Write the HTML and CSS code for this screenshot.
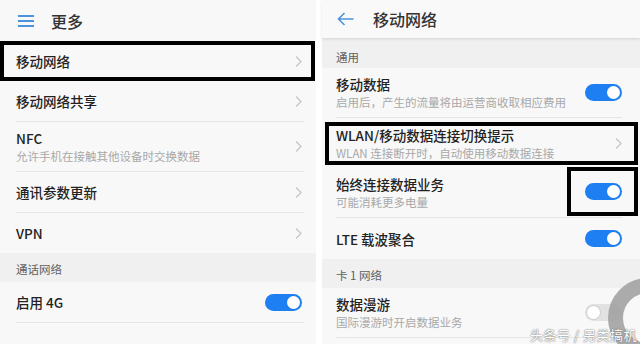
FILE: index.html
```html
<!DOCTYPE html>
<html lang="zh-CN">
<head>
<meta charset="utf-8">
<title>移动网络</title>
<link rel="stylesheet" href="styles.css">
</head>
<body>
<div class="screen">
  <section class="panel left">
    <header class="bar">
      <svg class="menu" width="16" height="12" viewBox="0 0 16 12"><path d="M0 1H16M0 6H16M0 11H16" stroke="#4b93dc" stroke-width="2"/></svg>
      <h1 class="bar-title menu-title">更多</h1>
    </header>
    <div class="row boxed first">
      <span class="title">移动网络</span>
      <svg class="chev" width="7" height="11" viewBox="0 0 7 11"><path d="M1 0.5L6 5.5L1 10.5" fill="none" stroke="#c4c4c4" stroke-width="1.2"/></svg>
    </div>
    <div class="row line">
      <span class="title">移动网络共享</span>
      <svg class="chev" width="7" height="11" viewBox="0 0 7 11"><path d="M1 0.5L6 5.5L1 10.5" fill="none" stroke="#c4c4c4" stroke-width="1.2"/></svg>
    </div>
    <div class="row line tall">
      <div class="text"><div class="title">NFC</div><div class="sub">允许手机在接触其他设备时交换数据</div></div>
      <svg class="chev" width="7" height="11" viewBox="0 0 7 11"><path d="M1 0.5L6 5.5L1 10.5" fill="none" stroke="#c4c4c4" stroke-width="1.2"/></svg>
    </div>
    <div class="row line">
      <span class="title">通讯参数更新</span>
      <svg class="chev" width="7" height="11" viewBox="0 0 7 11"><path d="M1 0.5L6 5.5L1 10.5" fill="none" stroke="#c4c4c4" stroke-width="1.2"/></svg>
    </div>
    <div class="row vpn">
      <span class="title">VPN</span>
      <svg class="chev" width="7" height="11" viewBox="0 0 7 11"><path d="M1 0.5L6 5.5L1 10.5" fill="none" stroke="#c4c4c4" stroke-width="1.2"/></svg>
    </div>
    <div class="section">通话网络</div>
    <div class="row line">
      <span class="title">启用 4G</span>
      <span class="toggle on"><span class="knob"></span></span>
    </div>
  </section>

  <section class="panel right">
    <header class="bar shadow">
      <svg class="back" width="17" height="14" viewBox="0 0 17 14"><path d="M16.5 7H1.5M7.5 1L1.5 7L7.5 13" fill="none" stroke="#4b93dc" stroke-width="1.6"/></svg>
      <h1 class="bar-title back-title">移动网络</h1>
    </header>
    <div class="section sec-top">通用</div>
    <div class="row line tall">
      <div class="text"><div class="title">移动数据</div><div class="sub">启用后，产生的流量将由运营商收取相应费用</div></div>
      <span class="toggle on"><span class="knob"></span></span>
    </div>
    <div class="row boxed wlan">
      <div class="text"><div class="title">WLAN/移动数据连接切换提示</div><div class="sub">WLAN 连接断开时，自动使用移动数据连接</div></div>
      <svg class="chev" width="7" height="11" viewBox="0 0 7 11"><path d="M1 0.5L6 5.5L1 10.5" fill="none" stroke="#c4c4c4" stroke-width="1.2"/></svg>
    </div>
    <div class="row line tall">
      <div class="text"><div class="title">始终连接数据业务</div><div class="sub">可能消耗更多电量</div></div>
      <span class="mark"><span class="toggle on"><span class="knob"></span></span></span>
    </div>
    <div class="row lte">
      <span class="title">LTE 载波聚合</span>
      <span class="toggle on"><span class="knob"></span></span>
    </div>
    <div class="section">卡 1 网络</div>
    <div class="row line tall">
      <div class="text"><div class="title">数据漫游</div><div class="sub">国际漫游时开启数据业务</div></div>
      <span class="toggle off"><span class="knob"></span></span>
    </div>
  </section>

  <svg class="ring" width="80" height="90" viewBox="0 0 80 90"><circle cx="48" cy="48" r="32.5" fill="none" stroke="#9d9d9d" stroke-opacity="0.85" stroke-width="15"/></svg>
  <div class="watermark">头条号 / 另类搞机</div>
</div>
</body>
</html>
```

FILE: styles.css
```css
html, body {
  margin: 0;
  padding: 0;
  background: #ffffff;
}

.screen {
  position: relative;
  display: flex;
  gap: 6px;
  width: 640px;
  height: 344px;
  overflow: hidden;
  font-family: "Noto Sans CJK SC", "Noto Sans", sans-serif;
  color: #262626;
}

.panel {
  display: flex;
  flex-direction: column;
  background: #f8f8f8;
  flex: none;
}

.panel.left { width: 316px; }
.panel.right { width: 318px; }

.bar {
  display: flex;
  align-items: center;
  flex: none;
  height: 41px;
}

.left .bar { padding-left: 18px; }

.right .bar {
  height: 38px;
  padding-left: 15px;
  background: #f9f9f9;
  box-shadow: 0 1px 3px rgba(0, 0, 0, 0.12);
  position: relative;
  z-index: 1;
}

.bar-title {
  margin: 0;
  font-size: 16px;
  font-weight: 500;
  color: #333333;
  line-height: 20px;
}

.menu-title { margin-left: 17px; }
.back-title { margin-left: 19px; }

.row {
  display: flex;
  align-items: center;
  justify-content: space-between;
  flex: none;
  height: 41px;
  box-sizing: border-box;
}

.left .row {
  margin: 0 12px 0 16px;
  padding-right: 2px;
}

.right .row {
  margin: 0 18px 0 14px;
}

.row.line { border-bottom: 1px solid #e6e6e6; }
.row.tall { height: 50px; }
.row.vpn { height: 40px; }
.row.lte { height: 41px; }

.left .row.boxed.first {
  height: 40px;
  margin: 0 1px 0 0;
  border: 4px solid #000;
  padding: 0 9px 0 12px;
}

.right .row.boxed.wlan {
  height: 43px;
  margin: 4px 2px 3px 3px;
  border: 4px solid #000;
  padding: 0 12px 0 7px;
}

.title {
  font-size: 13.5px;
  font-weight: 500;
  line-height: 18px;
  color: #222222;
}

.sub {
  font-size: 11.5px;
  line-height: 16px;
  color: #a8a8a8;
  margin-top: 1px;
}

.chev { flex: none; }

.section {
  display: flex;
  align-items: flex-end;
  flex: none;
  height: 29px;
  box-sizing: border-box;
  padding: 0 0 5px 16px;
  background: #f0f0f0;
  font-size: 11.5px;
  line-height: 16px;
  color: #606060;
}

.right .section { padding-left: 14px; }
.right .section.sec-top { height: 30px; padding-bottom: 3px; }

.toggle {
  display: flex;
  align-items: center;
  width: 37px;
  height: 17px;
  box-sizing: border-box;
  padding: 0 2px;
  border-radius: 9px;
  flex: none;
}

.toggle.on {
  background: #1d7ff2;
  justify-content: flex-end;
}

.toggle.off {
  background: #e2e2e2;
  justify-content: flex-start;
}

.knob {
  width: 13px;
  height: 13px;
  border-radius: 50%;
  background: #ffffff;
}

.toggle.off .knob {
  box-shadow: 0 0 0 1px #d0d0d0;
}

.mark {
  display: flex;
  align-items: center;
  box-sizing: border-box;
  width: 71px;
  height: 49px;
  margin: -2px -16px 0 0;
  padding-left: 14px;
  border: 4px solid #000;
}

.ring {
  position: absolute;
  left: 600px;
  top: 270px;
}

.watermark {
  position: absolute;
  right: 3px;
  bottom: 1px;
  font-size: 13px;
  line-height: 16px;
  color: #ffffff;
  text-shadow: 0 0 1px #666, 0 0 2px #888;
  letter-spacing: 0.5px;
}
```
